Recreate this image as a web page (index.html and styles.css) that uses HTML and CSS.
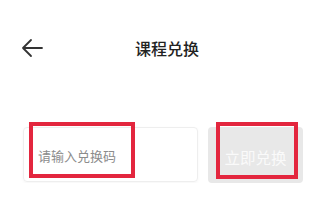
FILE: index.html
```html
<!DOCTYPE html>
<html lang="zh">
<head>
<meta charset="utf-8">
<link rel="stylesheet" href="styles.css">
</head>
<body>
<div class="header">
  <svg class="back" width="22" height="22" viewBox="0 0 22 22">
    <path d="M10 3 L2 11 L10 19 M2 11 H21" fill="none" stroke="#333" stroke-width="1.8" stroke-linecap="round" stroke-linejoin="round"/>
  </svg>
  <div class="title">课程兑换</div>
</div>
<div class="row">
  <div class="input">
    <span class="placeholder">请输入兑换码</span>
    <div class="mark mark-input"></div>
  </div>
  <div class="btn">
    <span>立即兑换</span>
    <div class="mark mark-btn"></div>
  </div>
</div>
</body>
</html>
```
FILE: styles.css
```css
html, body {
  margin: 0;
  padding: 0;
  background: #fff;
  font-family: "Noto Sans CJK SC", "Noto Sans", sans-serif;
}
.header {
  height: 96px;
  display: flex;
  align-items: center;
  padding-left: 21px;
}
.back {
  display: block;
}
.title {
  margin-left: 92px;
  font-size: 16px;
  font-weight: 500;
  color: #222;
  line-height: 20px;
}
.row {
  display: flex;
  margin-top: 31px;
  padding-left: 23px;
  gap: 10px;
}
.input {
  position: relative;
  width: 175px;
  height: 55px;
  box-sizing: border-box;
  border: 1px solid #eeeeee;
  border-radius: 4px;
  display: flex;
  align-items: center;
  padding-left: 14px;
  padding-top: 3px;
  box-shadow: 0 1px 3px rgba(0, 0, 0, 0.04);
}
.placeholder {
  font-size: 13px;
  color: #8c8c8c;
  line-height: 18px;
}
.btn {
  position: relative;
  width: 95px;
  height: 56px;
  background: #e8e8e8;
  border-radius: 4px;
  display: flex;
  align-items: center;
  justify-content: center;
  padding-top: 3px;
  box-sizing: border-box;
}
.btn span {
  font-size: 15.5px;
  color: #fafafa;
  line-height: 20px;
}
.mark {
  position: absolute;
  box-sizing: border-box;
  border: 4px solid #e3263e;
}
.mark-input {
  left: 5px;
  top: -6px;
  width: 106px;
  height: 56px;
}
.mark-btn {
  left: 8px;
  top: -5px;
  width: 82px;
  height: 57px;
}
```
